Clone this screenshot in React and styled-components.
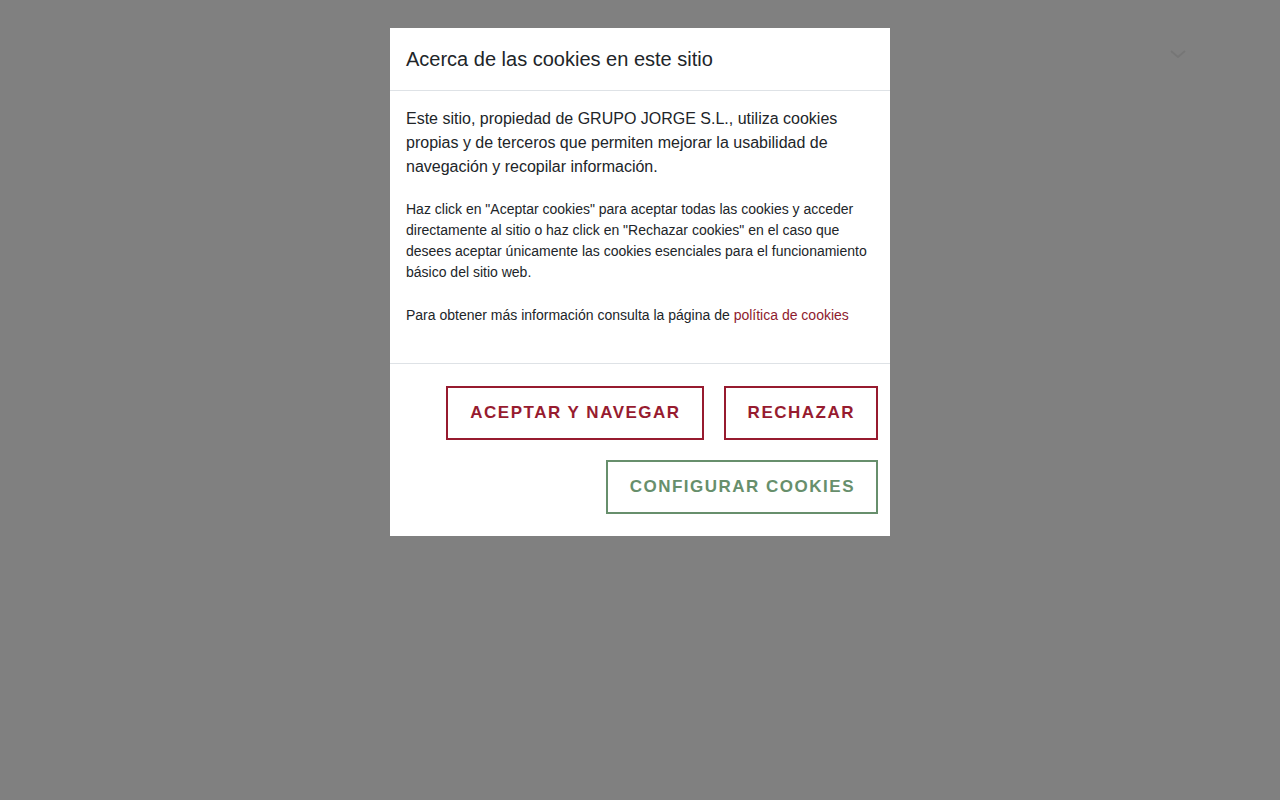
import styled, { createGlobalStyle } from 'styled-components'

const GlobalStyle = createGlobalStyle`
  html, body {
    margin: 0;
    padding: 0;
    background: #808080;
    font-family: "Liberation Sans", Arial, sans-serif;
    color: #212529;
  }
`

const Page = styled.div`
  height: 800px;
  position: relative;
`

const TopBar = styled.header`
  display: flex;
  justify-content: flex-end;
  padding: 49px 94px 0 0;
`

const Chevron = styled.svg`
  display: block;
  width: 16px;
  height: 10px;
`

const Backdrop = styled.div`
  position: fixed;
  inset: 0;
  display: flex;
  justify-content: center;
  align-items: flex-start;
  padding-top: 28px;
`

const Modal = styled.div`
  width: 500px;
  background: #ffffff;
  display: flex;
  flex-direction: column;
`

const Header = styled.div`
  padding: 16px;
  border-bottom: 1px solid #dee2e6;
`

const Title = styled.h5`
  margin: 0;
  font-size: 20px;
  font-weight: 400;
  line-height: 30px;
  color: #212529;
`

const Body = styled.div`
  padding: 16px 16px 0;
`

const Lead = styled.p`
  margin: 0 0 20px;
  font-size: 16px;
  line-height: 24px;
`

const Small = styled.p`
  margin: 0 0 37px;
  font-size: 14px;
  line-height: 21px;
`

const Gap = styled.span`
  display: block;
  height: 22px;
`

const Link = styled.a`
  color: #8e1b2e;
  text-decoration: none;
`

const Footer = styled.div`
  border-top: 1px solid #dee2e6;
  padding: 22px 12px;
  display: flex;
  flex-wrap: wrap;
  justify-content: flex-end;
  gap: 20px;
`

const Button = styled.button`
  height: 54px;
  padding: 0 21px 0 22px;
  background: #ffffff;
  border: 2px solid ${props => props.$color};
  color: ${props => props.$color};
  font-family: "Liberation Sans", Arial, sans-serif;
  font-size: 17px;
  font-weight: 700;
  letter-spacing: 1.5px;
  text-transform: uppercase;
  cursor: pointer;
`

const RED = '#971b2f'
const GREEN = '#678f6c'

export default function App() {
  return (
    <Page>
      <GlobalStyle />
      <TopBar>
        <Chevron viewBox="0 0 16 10">
          <path d="M1 2 L8 8 L15 2" fill="none" stroke="#767676" strokeWidth="1.8" />
        </Chevron>
      </TopBar>
      <Backdrop>
        <Modal>
          <Header>
            <Title>Acerca de las cookies en este sitio</Title>
          </Header>
          <Body>
            <Lead>
              Este sitio, propiedad de GRUPO JORGE S.L., utiliza cookies propias y de terceros que
              permiten mejorar la usabilidad de navegación y recopilar información.
            </Lead>
            <Small>
              Haz click en "Aceptar cookies" para aceptar todas las cookies y acceder directamente al
              sitio o haz click en "Rechazar cookies" en el caso que desees aceptar únicamente las
              cookies esenciales para el funcionamiento básico del sitio web.
              <Gap />
              Para obtener más información consulta la página de <Link href="#">política de cookies</Link>
            </Small>
          </Body>
          <Footer>
            <Button $color={RED}>Aceptar y navegar</Button>
            <Button $color={RED}>Rechazar</Button>
            <Button $color={GREEN}>Configurar cookies</Button>
          </Footer>
        </Modal>
      </Backdrop>
    </Page>
  )
}
